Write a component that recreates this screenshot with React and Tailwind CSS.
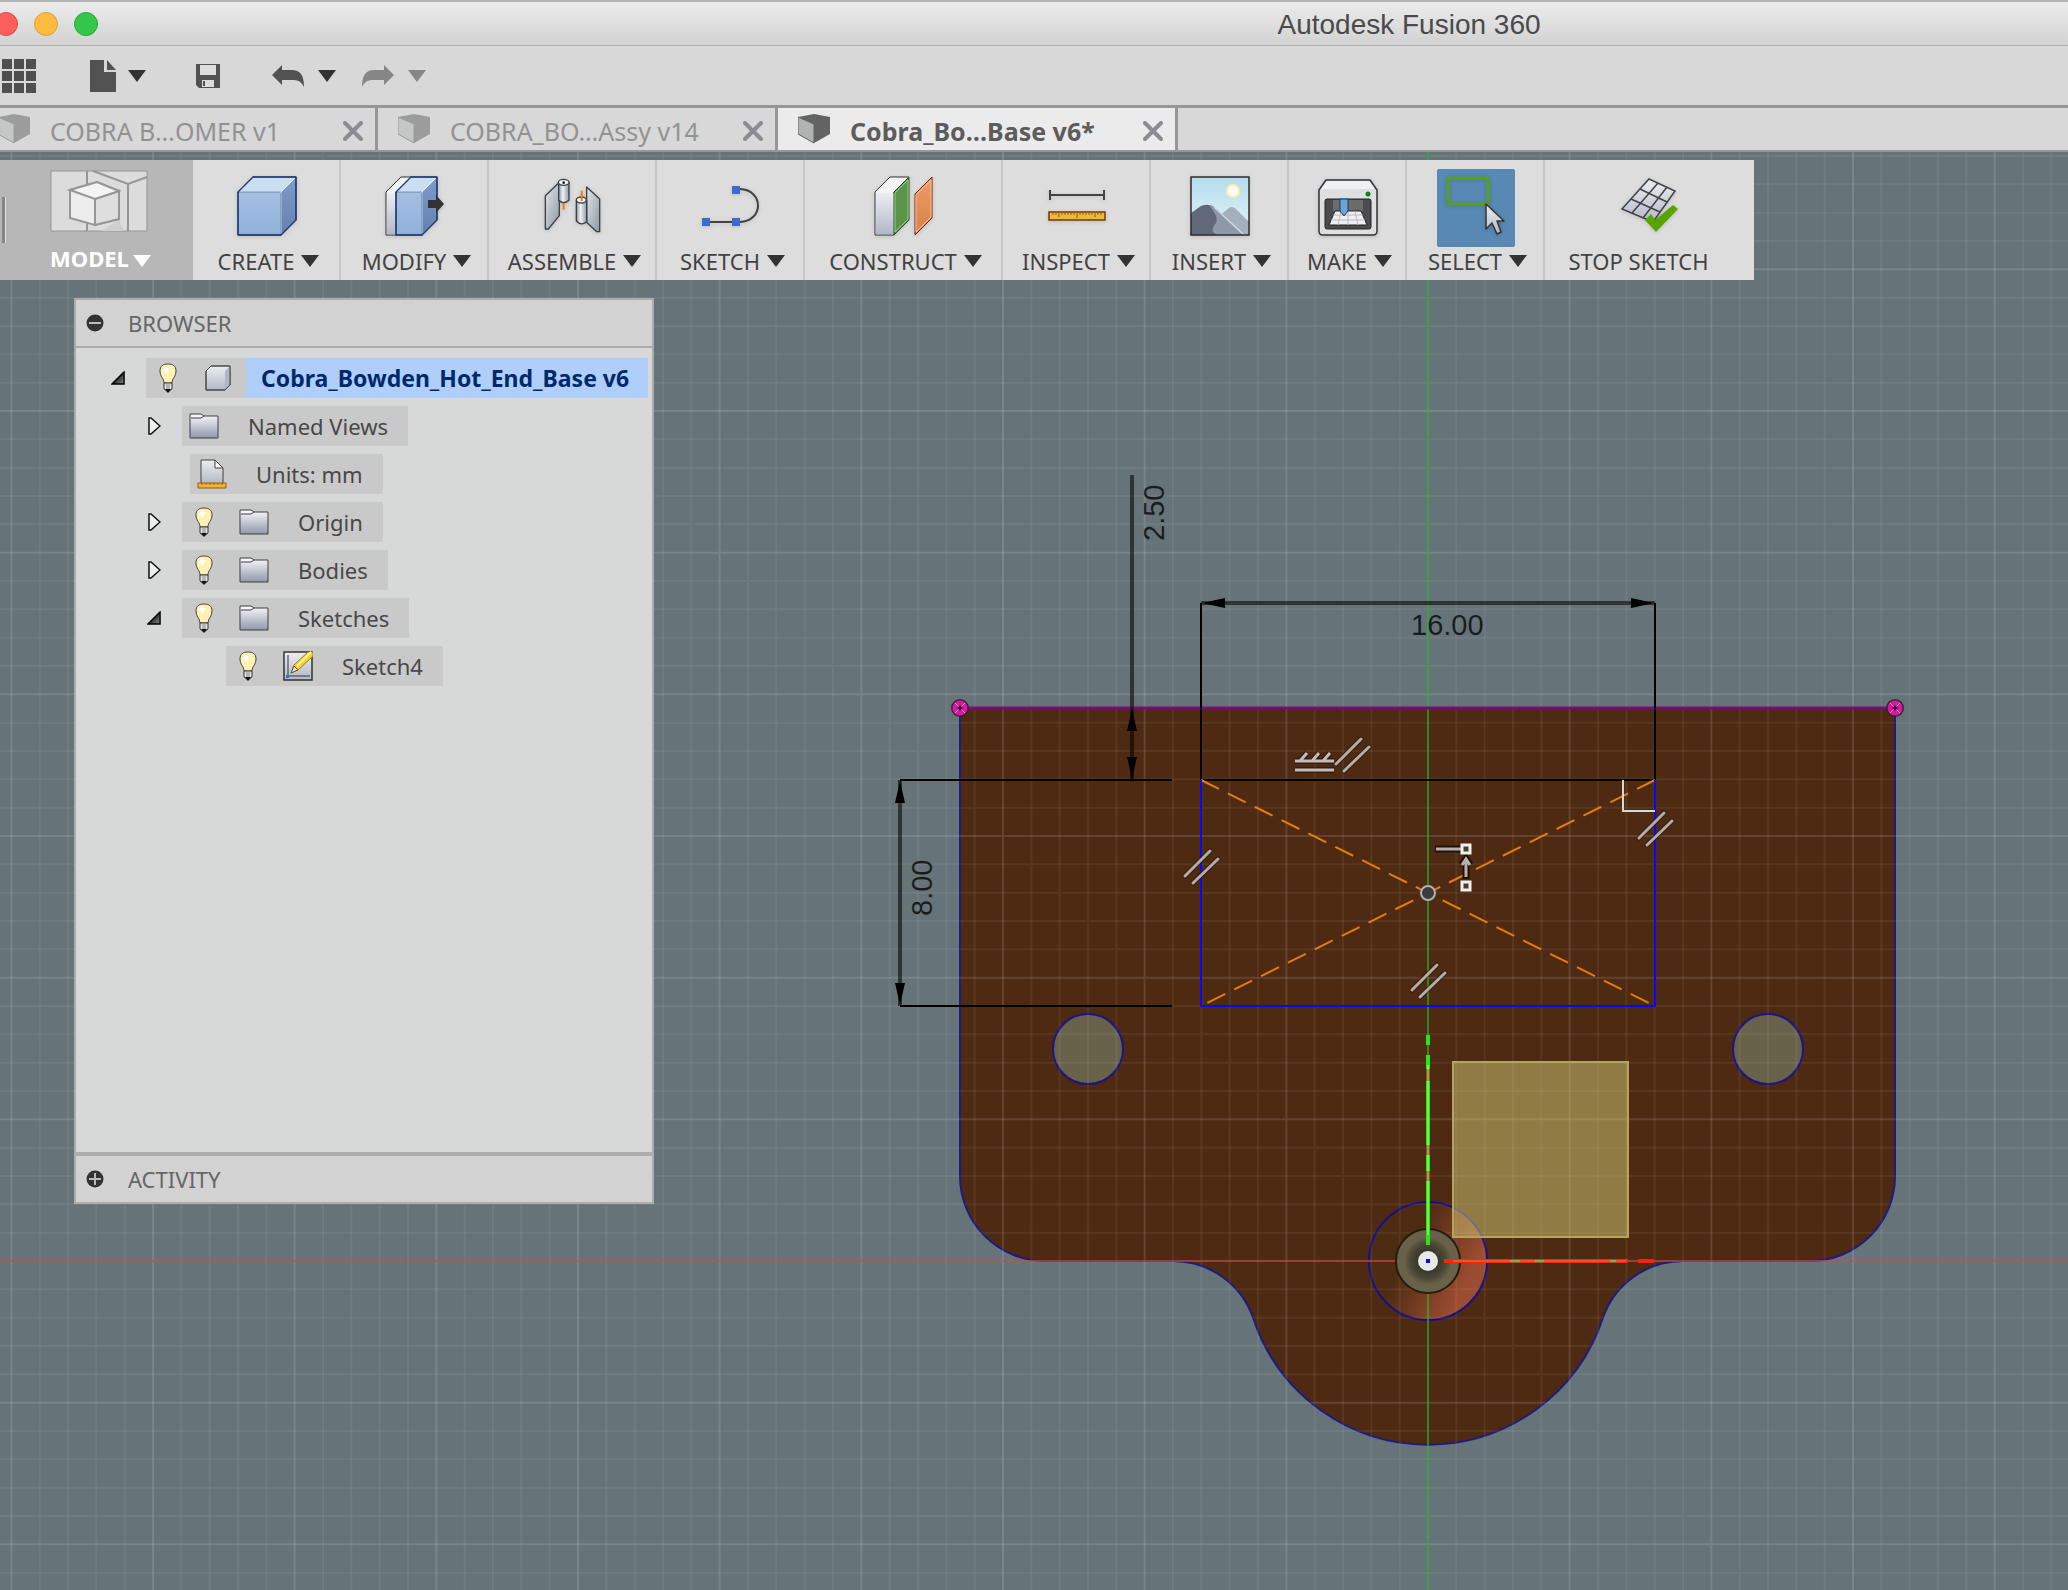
import React, { useState } from 'react';
import clsx from 'clsx';

// One grid square is 1 mm
const MM = 85 / 3;
const GRID = Array.from({ length: 121 }, (_, i) => i - 60);

const Caret = ({ className }) => (
  <svg viewBox="0 0 18 12" className={clsx("w-[18px] h-3 shrink-0", className)} fill="currentColor">
    <path d="M0 0H18L9 12Z" />
  </svg>
);

/* ---------- Quick access icons ---------- */

const GridIcon = () => (
  <svg viewBox="0 0 34 34" className="w-[34px] h-[34px]" fill="#4f4f4f">
    {[0, 12, 24].map((y) => [0, 12, 24].map((x) => <rect key={`${x}-${y}`} x={x} y={y} width="10" height="10" />))}
  </svg>
);

const FileIcon = () => (
  <svg viewBox="0 0 26 32" className="w-[26px] h-8" fill="#525252">
    <path d="M0 0H14V12H26V32H0Z" />
    <path d="M17 0L26 10H17Z" />
  </svg>
);

const SaveIcon = () => (
  <svg viewBox="0 0 24 24" className="w-6 h-6">
    <path d="M0 0H24V24H3L0 21Z" fill="#525252" />
    <path d="M4 1H20V11H4Z" fill="#dcdcdc" />
    <path d="M6 16H18V23H6Z" fill="#dcdcdc" />
    <path d="M7 17H9V22H7Z" fill="#525252" />
  </svg>
);

const UndoIcon = ({ className }) => (
  <svg viewBox="0 0 32 22" className={clsx("w-8 h-[22px]", className)} fill="currentColor">
    <path d="M0 10L10 0V5H20C28 5 32 10 32 22C29 16 26 15 20 15H10V20Z" />
  </svg>
);

const TabCube = ({ active }) => (
  <svg viewBox="0 0 32 30" className="w-8 h-[30px] shrink-0">
    <path d="M0 3L16 0L32 3V20L16 29L0 20Z" fill={active ? "#636363" : "#9c9c9c"} />
    <path d="M0 3L16 10V29L0 20Z" fill={active ? "#b0b3b1" : "#c4c7c5"} stroke={active ? "#636363" : "#9c9c9c"} />
  </svg>
);

/* ---------- Toolbar icons ---------- */

const Defs = () => (
  <svg className="absolute w-0 h-0" aria-hidden="true">
    <defs>
      <linearGradient id="blueFront" x1="0" y1="0" x2="0" y2="1">
        <stop offset="0" stopColor="#a4c0e0" /><stop offset="1" stopColor="#8fb0da" />
      </linearGradient>
      <linearGradient id="blueSide" x1="0" y1="0" x2="0" y2="1">
        <stop offset="0" stopColor="#7f9cc8" /><stop offset="1" stopColor="#6580b0" />
      </linearGradient>
      <linearGradient id="steel" x1="0" y1="0" x2="0" y2="1">
        <stop offset="0" stopColor="#eceef0" /><stop offset="1" stopColor="#b2b8c8" />
      </linearGradient>
      <linearGradient id="steelSide" x1="0" y1="0" x2="1" y2="1">
        <stop offset="0" stopColor="#e4e7ea" /><stop offset="1" stopColor="#8c98a4" />
      </linearGradient>
      <linearGradient id="folder" x1="0" y1="0" x2="0" y2="1">
        <stop offset="0.1" stopColor="#f0f1f4" /><stop offset="1" stopColor="#9098ac" />
      </linearGradient>
      <linearGradient id="pin" x1="0" y1="0" x2="1" y2="0">
        <stop offset="0" stopColor="#8793a0" /><stop offset="0.4" stopColor="#f0f2f4" /><stop offset="1" stopColor="#8f9ba8" />
      </linearGradient>
      <linearGradient id="sky" x1="0" y1="0" x2="0" y2="1">
        <stop offset="0" stopColor="#b4dcec" /><stop offset="1" stopColor="#e4f4fa" />
      </linearGradient>
      <linearGradient id="orange" x1="0" y1="0" x2="0" y2="1">
        <stop offset="0" stopColor="#f09c64" /><stop offset="1" stopColor="#d8804c" />
      </linearGradient>
      <linearGradient id="wedge" x1="0" y1="0" x2="1" y2="1">
        <stop offset="0.3" stopColor="#111" /><stop offset="1" stopColor="#888" />
      </linearGradient>
    </defs>
  </svg>
);

const iconClass = "w-[58px] h-[58px] overflow-visible drop-shadow-sm";

const ModelIcon = () => (
  <svg viewBox="0 0 98 62" className="w-[98px] h-[62px]" fill="none" stroke="#969696" strokeWidth="2">
    <path d="M1 1H97V61H1Z" fill="#dcdcdc" strokeWidth="1" />
    <path d="M37 1V61M43 1L78 14L97 7M78 14V61" />
    <path d="M69 50L74 61H50Z" fill="#cfcfcf" stroke="none" />
    <path d="M20 20L47 12L69 21V49L45 55L20 48Z" fill="#ededed" />
    <path d="M45 29L69 21V49L45 55Z" fill="#dedede" />
    <path d="M20 20L47 12L69 21L45 29Z" fill="#f4f4f4" />
  </svg>
);

const CreateIcon = () => (
  <svg viewBox="0 0 58 58" className={iconClass} stroke="#1f3a6e" strokeLinejoin="round">
    <path d="M0 15H43V58H0Z" fill="url(#blueFront)" />
    <path d="M0 15L15 0H58L43 15Z" fill="#cbdff0" />
    <path d="M43 15L58 0V43L43 58Z" fill="url(#blueSide)" />
    <path d="M1 15H43V57M43 15L57 1" stroke="#dcebf8" fill="none" />
    <path d="M0 15L15 0H58V43L43 58H0Z" fill="none" strokeWidth="1.4" />
  </svg>
);

const ModifyIcon = () => (
  <svg viewBox="0 0 58 58" className={iconClass} stroke="#1f3a6e" strokeLinejoin="round">
    <path d="M0 15L15 0H26L10 15V58H0Z" fill="#f3f4f6" stroke="#333" />
    <path d="M1 16H10V57H1Z" fill="url(#steel)" stroke="none" />
    <path d="M10 15H36V58H10Z" fill="url(#blueFront)" />
    <path d="M10 15L25 0H51L36 15Z" fill="#cbdff0" />
    <path d="M36 15L51 0V43L36 58Z" fill="url(#blueSide)" />
    <path d="M11 15H36V57M36 15L50 1" stroke="#dcebf8" fill="none" />
    <path d="M10 15L25 0H51V43L36 58H10Z" fill="none" strokeWidth="1.4" />
    <path d="M42 23H50V18L58 27L50 36V31H42Z" fill="#333" stroke="none" />
  </svg>
);

const AssembleIcon = () => (
  <svg viewBox="190 52 174 174" className={iconClass} stroke="#3b4046" strokeWidth="4" strokeLinejoin="round">
    <path d="M194 108L236 68V168L203 208H194Z" fill="url(#steelSide)" />
    <path d="M249 128V150" stroke="#ff7800" strokeWidth="6" />
    <path d="M234 68V122Q249 136 265 122V68Z" fill="url(#pin)" />
    <ellipse cx="249" cy="68" rx="16" ry="9" fill="#f3f4f5" />
    <circle cx="249" cy="69" r="4" fill="#222" stroke="none" />
    <path d="M318 82L357 118V216H348L318 188Z" fill="url(#steelSide)" />
    <path d="M287 122V184Q302 200 318 186V122Z" fill="url(#pin)" />
    <ellipse cx="302" cy="121" rx="15" ry="9" fill="#f3f4f5" />
    <path d="M303 93V124" stroke="#ff7800" strokeWidth="6" />
  </svg>
);

const SketchIcon = () => (
  <svg viewBox="0 0 58 58" className={iconClass} fill="#3c6cc8">
    <path d="M4 45H38C62 44 62 13 38 12H34" fill="none" stroke="#424242" strokeWidth="2" />
    <path d="M0 41H8V49H0ZM30 41H38V49H30ZM30 9H38V17H30Z" />
  </svg>
);

const ConstructIcon = () => (
  <svg viewBox="0 0 58 58" className={iconClass} strokeLinejoin="round">
    <path d="M0 15L15 0H34L19 15V58H0Z" fill="#f4f4f6" stroke="#333" />
    <path d="M1 16H19V57H1Z" fill="url(#steel)" />
    <path d="M19 15L34 0V43L19 58Z" fill="#5a9448" stroke="#24501c" />
    <path d="M20 16L33 3V42L20 55Z" fill="none" stroke="#9cc890" />
    <path d="M40 17L57 0V41L40 58Z" fill="url(#orange)" stroke="#6a2c10" />
    <path d="M41 18L56 3V40L41 55Z" fill="none" stroke="#f8c09c" />
  </svg>
);

const InspectIcon = () => (
  <svg viewBox="0 0 58 58" className={iconClass} fill="none">
    <path d="M2 18H56M2 13V23M56 13V23" stroke="#424242" strokeWidth="2" />
    <path d="M1 35H57V43H1Z" fill="#e8bc38" stroke="#7c3408" strokeWidth="1.5" />
    <path d="M5 36V38M8 36V38M11 36V40M14 36V38M17 36V38M20 36V38M23 36V38M26 36V38M29 36V41M32 36V38M35 36V38M38 36V38M41 36V38M44 36V38M47 36V40M50 36V38M53 36V38" stroke="#8c5c10" />
  </svg>
);

const InsertIcon = () => (
  <svg viewBox="0 0 58 58" className={iconClass}>
    <path d="M0 0H58V58H0Z" fill="url(#sky)" />
    <circle cx="42" cy="14" r="7" fill="#fcf0b0" />
    <circle cx="42" cy="14" r="5" fill="#fffef4" />
    <path d="M27 40L38 31Q42 28 46 33L58 45V58H40Z" fill="#a4b0bc" />
    <path d="M0 36L10 29Q17 26 23 30L34 40L53 58H0Z" fill="#60687a" />
    <path d="M18 28Q22 28 30 36L53 58H26Q18 54 25 46Q28 40 18 28Z" fill="#8e98aa" />
    <path d="M23 30L53 58" stroke="#d4dae0" strokeWidth="1.5" />
    <path d="M0 0H58V58H0Z" fill="none" stroke="#2c2c2c" strokeWidth="1.5" />
  </svg>
);

const MakeIcon = () => (
  <svg viewBox="0 0 58 58" className={iconClass} strokeLinejoin="round">
    <path d="M0 13L7 3H51L58 13V54Q58 58 54 58H4Q0 58 0 54Z" fill="#dedfe1" stroke="#333" strokeWidth="1.5" />
    <path d="M2 12L8 4H50L56 12Z" fill="#f0f1f4" />
    <circle cx="49" cy="17" r="2.5" fill="#148014" />
    <rect x="6" y="22" width="46" height="30" rx="2" fill="#4c4c4c" stroke="#222" />
    <path d="M14 23H44V34H14Z" fill="#6c6c6c" />
    <path d="M16 34H42L48 48H10Z" fill="#f0f0f2" stroke="#222" />
    <path d="M14 38H44M12 43H46M22 34L19 48M29 34V48M36 34L39 48" stroke="#b8b8c0" fill="none" />
    <path d="M21 22H29V34L25 39L21 34Z" fill="#6ca4d4" stroke="#103c78" />
  </svg>
);

const SelectIcon = () => (
  <svg viewBox="0 0 58 58" className={iconClass} fill="none">
    <path d="M1 1H41V27H1Z" stroke="#58a400" strokeWidth="2.5" />
    <path d="M39 27V52L45 46L50 57L54 55L50 44H57Z" fill="url(#steel)" stroke="#333" strokeWidth="1.5" strokeLinejoin="round" />
  </svg>
);

const StopSketchIcon = () => (
  <svg viewBox="0 0 58 58" className={iconClass} fill="none">
    <path d="M28 2L54 14L32 45L1 32Z" fill="url(#steel)" stroke="#424242" strokeWidth="1.5" />
    <path d="M19 12L46 25M10 22L39 35M37 6L11 36M46 10L22 41" stroke="#424242" strokeWidth="1.5" />
    <path d="M24 43L30 37L34 43L52 28L57 32L35 55Z" fill="#58a400" />
  </svg>
);

/* ---------- Browser tree icons ---------- */

const Bulb = () => (
  <svg viewBox="0 0 18 30" className="w-[18px] h-[30px]">
    <path d="M5 20C5 15 1 14 1 8C1 3 4 1 9 1S17 3 17 8C17 14 13 15 13 20Z" fill="#fff0b4" stroke="#444" />
    <path d="M5 7Q5 4 8 4Q10 5 9 9Q6 12 5 7Z" fill="#fff" />
    <path d="M5 20H13V26L9 29L5 26Z" fill="#e4e4e4" stroke="#333" />
    <path d="M8 21V26M10 21V26" stroke="#888" />
    <path d="M6 26H12L9 30Z" fill="#111" />
  </svg>
);

const BodyIcon = () => (
  <svg viewBox="0 0 26 26" className="w-[26px] h-[26px]" stroke="#484848" strokeLinejoin="round">
    <path d="M1 6L6 1H25V20L20 25H1Z" fill="url(#steel)" />
    <path d="M20 6L25 1V20L20 25Z" fill="#b0b6c4" stroke="none" />
    <path d="M1 6L6 1H25V20L20 25H1Z" fill="none" />
  </svg>
);

const FolderIcon = () => (
  <svg viewBox="0 0 30 26" className="w-[30px] h-[26px]" stroke="#404040" strokeLinejoin="round">
    <path d="M1 5V1H12L15 3H29V25H1Z" fill="url(#folder)" />
    <path d="M2 5H12L15 3" fill="none" />
    <path d="M3 3H11" stroke="#fff" />
  </svg>
);

const UnitsIcon = () => (
  <svg viewBox="0 0 30 30" className="w-[30px] h-[30px]" strokeLinejoin="round">
    <path d="M4 1H18L26 9V25H4Z" fill="url(#steel)" stroke="#404040" />
    <path d="M18 1V9H26Z" fill="#fff" stroke="#404040" />
    <path d="M1 24H29V29H1Z" fill="#ecb830" stroke="#98580c" />
    <path d="M5 24V26M9 24V26M13 24V26M17 24V26M21 24V26M25 24V26" stroke="#98580c" />
  </svg>
);

const SketchItemIcon = () => (
  <svg viewBox="0 0 30 30" className="w-[30px] h-[30px]">
    <path d="M1 1H29V29H1Z" fill="url(#steel)" stroke="#333" strokeWidth="1.5" />
    <path d="M5 4V25H27" fill="none" stroke="#333" />
    <path d="M3 24H6V27H3Z" fill="#3c6cc8" />
    <path d="M8 22L11 14L25 1H30V5L15 19Z" fill="#f8d030" stroke="#a87c10" />
    <path d="M14 15L28 1" stroke="#fff4a0" strokeWidth="2" />
    <path d="M8 22L11 15L15 19Z" fill="#f8dcb4" stroke="#555" />
  </svg>
);

const toolbarItems = [
  { label: "CREATE", icon: <CreateIcon />, width: "w-[148px]" },
  { label: "MODIFY", icon: <ModifyIcon />, width: "w-[148px]" },
  { label: "ASSEMBLE", icon: <AssembleIcon />, width: "w-[168px]" },
  { label: "SKETCH", icon: <SketchIcon />, width: "w-[148px]" },
  { label: "CONSTRUCT", icon: <ConstructIcon />, width: "w-[198px]" },
  { label: "INSPECT", icon: <InspectIcon />, width: "w-[148px]" },
  { label: "INSERT", icon: <InsertIcon />, width: "w-[138px]" },
  { label: "MAKE", icon: <MakeIcon />, width: "w-[118px]" },
  { label: "SELECT", icon: <SelectIcon />, width: "w-[138px]", active: true },
];

const documents = [
  { name: "COBRA B…OMER v1" },
  { name: "COBRA_BO…Assy v14" },
  { name: "Cobra_Bo…Base v6*", active: true },
];

const treeItems = [
  { name: "Named Views", icon: <FolderIcon />, indent: "pl-[64px]", toggle: "closed" },
  { name: "Units: mm", icon: <UnitsIcon />, indent: "pl-[114px]" },
  { name: "Origin", icon: <FolderIcon />, indent: "pl-[64px]", toggle: "closed", bulb: true },
  { name: "Bodies", icon: <FolderIcon />, indent: "pl-[64px]", toggle: "closed", bulb: true },
  { name: "Sketches", icon: <FolderIcon />, indent: "pl-[64px]", toggle: "open", bulb: true },
  { name: "Sketch4", icon: <SketchItemIcon />, indent: "pl-[150px]", bulb: true },
];

const TitleBar = () => (
  <header className="h-[46px] flex items-center border-t-2 border-t-[#b4b4b4] border-b border-b-[#aeaeae] bg-gradient-to-b from-[#ececec] to-[#d2d2d2]">
    <div className="flex gap-4 -ml-[6px]">
      <button aria-label="Close" className="w-6 h-6 rounded-full bg-[#fc605c] border border-[#de4643]" />
      <button aria-label="Minimize" className="w-6 h-6 rounded-full bg-[#fdbc40] border border-[#dd9f3a]" />
      <button aria-label="Zoom" className="w-6 h-6 rounded-full bg-[#34c84a] border border-[#27a732]" />
    </div>
    <h1 className="flex-1 pl-[652px] pt-[2px] text-center font-['Liberation_Sans',sans-serif] text-[28px] leading-8 text-[#4a4a4a]">Autodesk Fusion 360</h1>
  </header>
);

const QuickAccess = () => (
  <nav className="h-[62px] flex items-center pl-[2px] bg-[#d8d8d8] border-b-[3px] border-[#969696] text-[#333]">
    <button aria-label="Data panel"><GridIcon /></button>
    <button aria-label="File" className="ml-[54px] flex items-center gap-3"><FileIcon /><Caret /></button>
    <button aria-label="Save" className="ml-[50px]"><SaveIcon /></button>
    <button aria-label="Undo" className="ml-[52px] flex items-center gap-[14px]"><UndoIcon className="text-[#525252]" /><Caret /></button>
    <button aria-label="Redo" className="ml-[26px] flex items-center gap-[14px] text-[#868686]"><UndoIcon className="-scale-x-100" /><Caret /></button>
  </nav>
);

const DocumentTabs = () => (
  <div role="tablist" className="h-11 flex bg-[#d8d8d8] border-b-2 border-[#969696]">
    {documents.map((doc, index) => (
      <div
        key={doc.name}
        className={clsx(
          "w-[400px] flex items-center pl-5 pr-3 border-r-[3px] border-[#969696]",
          index === 0 && "-ml-[22px]",
          doc.active ? "bg-[#ebebeb] text-[#5c5c5c] font-bold" : "text-[#929292]"
        )}
      >
        <button role="tab" aria-selected={!!doc.active} className="flex-1 flex items-center text-left">
          <TabCube active={doc.active} />
          <span className="ml-5 pt-1 text-[25px] leading-8 whitespace-nowrap">{doc.name}</span>
        </button>
        <button aria-label={`Close ${doc.name}`} className="pt-1">
          <svg viewBox="0 0 20 20" className="w-5 h-5" stroke="#8b8b90" strokeWidth="4" strokeLinecap="round">
            <path d="M2 2L18 18M18 2L2 18" />
          </svg>
        </button>
      </div>
    ))}
  </div>
);

const Toolbar = () => (
  <div role="toolbar" className="flex w-fit h-[120px] bg-[#dddddd] text-[22px] leading-7 text-[#424242]">
    <button className="w-[193px] pl-[50px] pt-[10px] flex flex-col relative bg-[#b7b7b7] text-white font-bold">
      <span className="absolute left-[2px] top-[37px] w-1 h-[46px] bg-[#858585] border-r border-[#e0e0e0]" />
      <ModelIcon />
      <span className="flex items-center gap-1 mt-3">MODEL<Caret className="mt-[6px]" /></span>
    </button>
    {toolbarItems.map((item) => (
      <button key={item.label} className={clsx(item.width, "flex flex-col items-center pl-[2px] pt-[9px] border-r-2 border-[#c8c8c8]")}>
        <span className={clsx("w-[78px] h-[78px] flex justify-center pt-2", item.active && "bg-[#5789b4] rounded-xs")}>{item.icon}</span>
        <span className="flex items-center gap-[7px] pl-[3px]">{item.label}<Caret className="text-[#333]" /></span>
      </button>
    ))}
    <button className="w-[209px] flex flex-col items-center pt-[9px]">
      <span className="w-[78px] h-[78px] flex justify-center pt-2"><StopSketchIcon /></span>
      <span className="pr-[22px]">STOP SKETCH</span>
    </button>
  </div>
);

const Toggle = ({ state, onClick }) => (
  <button aria-label={state === "open" ? "Collapse" : "Expand"} onClick={onClick} className="w-7 mr-[14px] flex justify-center shrink-0">
    {state === "open" ? (
      <svg viewBox="0 0 15 15" className="w-[14px] h-[14px]"><path d="M1 14L14 1V14Z" fill="url(#wedge)" stroke="#000" strokeWidth="1.5" /></svg>
    ) : (
      <svg viewBox="0 0 13 18" className="w-[13px] h-[18px]"><path d="M1 1H3L12 9L3 17H1Z" fill="#f0f0f0" stroke="#111" strokeWidth="1.5" /></svg>
    )}
  </button>
);

const BrowserPanel = () => {
  const [open, setOpen] = useState(true);

  return (
    <section className="w-[580px] ml-[74px] mt-[18px] border-2 border-[#acacac] bg-[#d7d9d8] text-[22px] leading-8 text-[#484848]">
      <div className="h-12 flex items-center pl-[10px] bg-[#d2d2d2] border-b-2 border-[#acacac] text-[#666]">
        <button aria-label="Collapse browser">
          <svg viewBox="0 0 18 18" className="w-[18px] h-[18px]"><circle cx="9" cy="9" r="8.5" fill="#333" /><path d="M3 9H15" stroke="#bbb" strokeWidth="2" /></svg>
        </button>
        <h2 className="ml-6">BROWSER</h2>
      </div>

      <ul className="min-h-[804px] pt-[10px] flex flex-col gap-2">
        <li className="h-10 flex items-center pl-[28px]">
          <Toggle state={open ? "open" : "closed"} onClick={() => setOpen(!open)} />
          <span className="h-10 w-[100px] flex items-center gap-[28px] pl-[13px] bg-[#c9c9c9]"><Bulb /><BodyIcon /></span>
          <span className="h-10 flex-1 mr-1 pl-[15px] flex items-center bg-[#afcffa] text-[23px] text-[#00296b] font-bold whitespace-nowrap">Cobra_Bowden_Hot_End_Base v6</span>
        </li>
        {open && treeItems.map((item) => (
          <li key={item.name} className={clsx("h-10 flex items-center", item.indent)}>
            {item.toggle && <Toggle state={item.toggle} />}
            <span className="h-10 pr-5 flex items-center bg-[#c9c9c9]">
              {item.bulb && <span className="w-[50px] pl-[13px]"><Bulb /></span>}
              <span className="w-[66px] pl-[7px]">{item.icon}</span>
              {item.name}
            </span>
          </li>
        ))}
      </ul>

      <div className="h-[50px] flex items-center pl-[10px] bg-[#d2d2d2] border-t-4 border-[#acacac] text-[#666]">
        <button aria-label="Expand activity">
          <svg viewBox="0 0 18 18" className="w-[18px] h-[18px]"><circle cx="9" cy="9" r="8.5" fill="#333" /><path d="M3 9H15M9 3V15" stroke="#bbb" strokeWidth="2" /></svg>
        </button>
        <h2 className="ml-6">ACTIVITY</h2>
      </div>
    </section>
  );
};

/* ---------- Sketch canvas, drawn around the model origin ---------- */

const Parallel = ({ x, y }) => (
  <g transform={`translate(${x} ${y})`} strokeLinecap="round">
    <path d="M-16 9L9 -16M-8 16L17 -8" stroke="#2a1608" strokeWidth="5" opacity="0.6" />
    <path d="M-16 9L9 -16M-8 16L17 -8" stroke="#b4aca8" strokeWidth="3" />
  </g>
);

const Pin = ({ x }) => (
  <g transform={`translate(${x} -553)`}>
    <circle r="9" fill="#2c2430" opacity="0.9" />
    <circle r="5" fill="none" stroke="#d818a0" strokeWidth="5" />
    <path d="M-5 -5L5 5M5 -5L-5 5" stroke="#f080d0" strokeWidth="1" />
    <circle r="2" fill="#40102c" />
  </g>
);

const SketchCanvas = () => (
  <svg className="absolute inset-0 w-full h-full bg-[#667378]" fill="none">
    <defs>
      <radialGradient id="bore">
        <stop offset="0.35" stopColor="#3c3a2c" />
        <stop offset="0.55" stopColor="#4c4838" />
        <stop offset="0.75" stopColor="#6a6248" />
      </radialGradient>
      <linearGradient id="copper" x1="0" y1="0.2" x2="1" y2="0.7">
        <stop offset="0.35" stopColor="#4e2b13" />
        <stop offset="0.85" stopColor="#9c4c30" />
      </linearGradient>
    </defs>
    <g transform="translate(1428 1109)">
      <path
        d="M-468 -553H467V-85A85 85 0 0 1 382 0H255A85 85 0 0 0 174.5 58A184 184 0 0 1 -174.5 58A85 85 0 0 0 -255 0H-383A85 85 0 0 1 -468 -85Z"
        fill="#4e2a13" stroke="#1c1c80" strokeWidth="2"
      />
      <circle cx="-340" cy="-212" r="35" fill="#69624a" stroke="#1a1488" strokeWidth="2" />
      <circle cx="340" cy="-212" r="35" fill="#69624a" stroke="#1a1488" strokeWidth="2" />
      <circle r="59" fill="url(#copper)" stroke="#14108c" strokeWidth="2" />

      {GRID.map((i) => (
        <path
          key={i}
          d={`M${i * MM} -1200V800M-1800 ${i * MM}H1800`}
          stroke="#fff" strokeWidth="2" opacity={i % 5 === 0 ? 0.12 : 0.06}
        />
      ))}

      <path d="M-1500 0H1500" stroke="#c83c3c" strokeWidth="2" opacity="0.6" />
      <path d="M0 -1200V800" stroke="#14b414" strokeWidth="2" opacity="0.6" />
      <path d="M-468 -553H467" stroke="#780c78" strokeWidth="3" />
      <Pin x={-468} />
      <Pin x={467} />

      {/* Dimensions */}
      <g stroke="#000" strokeWidth="2">
        <path d="M-227 -658V-481M227 -658V-481M-528 -481H-256M-227 -481H227M-528 -255H-256" />
        <path d="M-227 -658H227M-296 -786V-481M-528 -481V-255" strokeWidth="4" opacity="0.55" />
      </g>
      <g fill="#000">
        <path d="M-226 -658L-203 -663V-653ZM226 -658L203 -663V-653Z" />
        <path d="M-296 -552L-301 -530H-291ZM-296 -482L-301 -504H-291Z" />
        <path d="M-528 -480L-533 -458H-523ZM-528 -256L-533 -278H-523Z" />
      </g>
      <g fill="#000" fillOpacity="0.75" className="font-['Liberation_Sans',sans-serif] text-[29px]">
        <text x="-17" y="-626">16.00</text>
        <text transform="translate(-264 -720) rotate(-90)">2.50</text>
        <text transform="translate(-496 -345) rotate(-90)">8.00</text>
      </g>

      {/* Rectangle profile */}
      <path d="M-227 -481L227 -255M227 -481L-227 -255" stroke="#e87c08" strokeWidth="2" strokeDasharray="20 10" />
      <path d="M-227 -481V-255H227V-481" stroke="#0808f4" strokeWidth="2" />
      <circle cy="-368" r="7" fill="#3c3c3c" stroke="#b0b0b0" strokeWidth="2" />

      {/* Constraint glyphs */}
      <Parallel x={-76} y={-506} />
      <Parallel x={-227} y={-394} />
      <Parallel x={227} y={-432} />
      <Parallel x={0} y={-280} />
      <g strokeWidth="3">
        <path d="M-133 -500H-94M-133 -491H-94M-128 -500L-121 -508M-116 -500L-109 -508M-105 -500L-98 -508" stroke="#2a1608" strokeWidth="6" opacity="0.6" />
        <path d="M-133 -500H-94M-133 -491H-94M-128 -500L-121 -508M-116 -500L-109 -508M-105 -500L-98 -508" stroke="#c4bcb8" />
      </g>
      <path d="M195 -481V-450H227" stroke="#d8d8d8" strokeWidth="2" />
      <path d="M7 -412H34M38 -402V-382M34 -396L38 -402L42 -396" stroke="#201008" strokeWidth="7" />
      <path d="M8 -412H34M38 -402V-384M34 -396L38 -402L42 -396" stroke="#b8b0ac" strokeWidth="3" />
      <path d="M34 -416H42V-408H34ZM34 -379H42V-371H34Z" fill="#4c3c34" stroke="#f0f0f0" strokeWidth="3" />

      {/* Origin planes and axes */}
      <path d="M25 -199H200V-24H25Z" fill="#d4cc78" fillOpacity="0.5" stroke="#b4a460" strokeWidth="2" />
      <circle r="32" fill="url(#bore)" stroke="#241c0c" strokeWidth="2" />
      <path d="M0 -192V-16M16 0H200" stroke="#a8984c" strokeWidth="3" />
      <path d="M0 -226V-216M0 -206V-192M0 -180V-116M0 -106V-90M0 -80V-16" stroke="#28e814" strokeWidth="4" />
      <path d="M0 -196V-192M0 -180V-116M0 -106V-90M0 -80V-26" stroke="#6cff48" strokeWidth="2" />
      <path d="M16 0H82M92 0H107M116 0H182M188 0H200M210 0H226" stroke="#f02810" strokeWidth="4" />
      <path d="M25 0H82M92 0H107M116 0H182M188 0H198" stroke="#f87850" strokeWidth="1" />
      <circle r="10" fill="#e8e8e8" />
      <path d="M-2 -2H2V2H-2Z" fill="#0808f4" />
    </g>
  </svg>
);

const App = () => {
  return (
    <div className="min-h-screen flex flex-col overflow-hidden bg-[#667378] font-['Noto_Sans',sans-serif]">
      <Defs />
      <TitleBar />
      <QuickAccess />
      <DocumentTabs />
      <main className="flex-1 relative overflow-hidden">
        <SketchCanvas />
        <div className="relative pt-2 pb-10">
          <Toolbar />
          <BrowserPanel />
        </div>
      </main>
    </div>
  );
};

export default App;
